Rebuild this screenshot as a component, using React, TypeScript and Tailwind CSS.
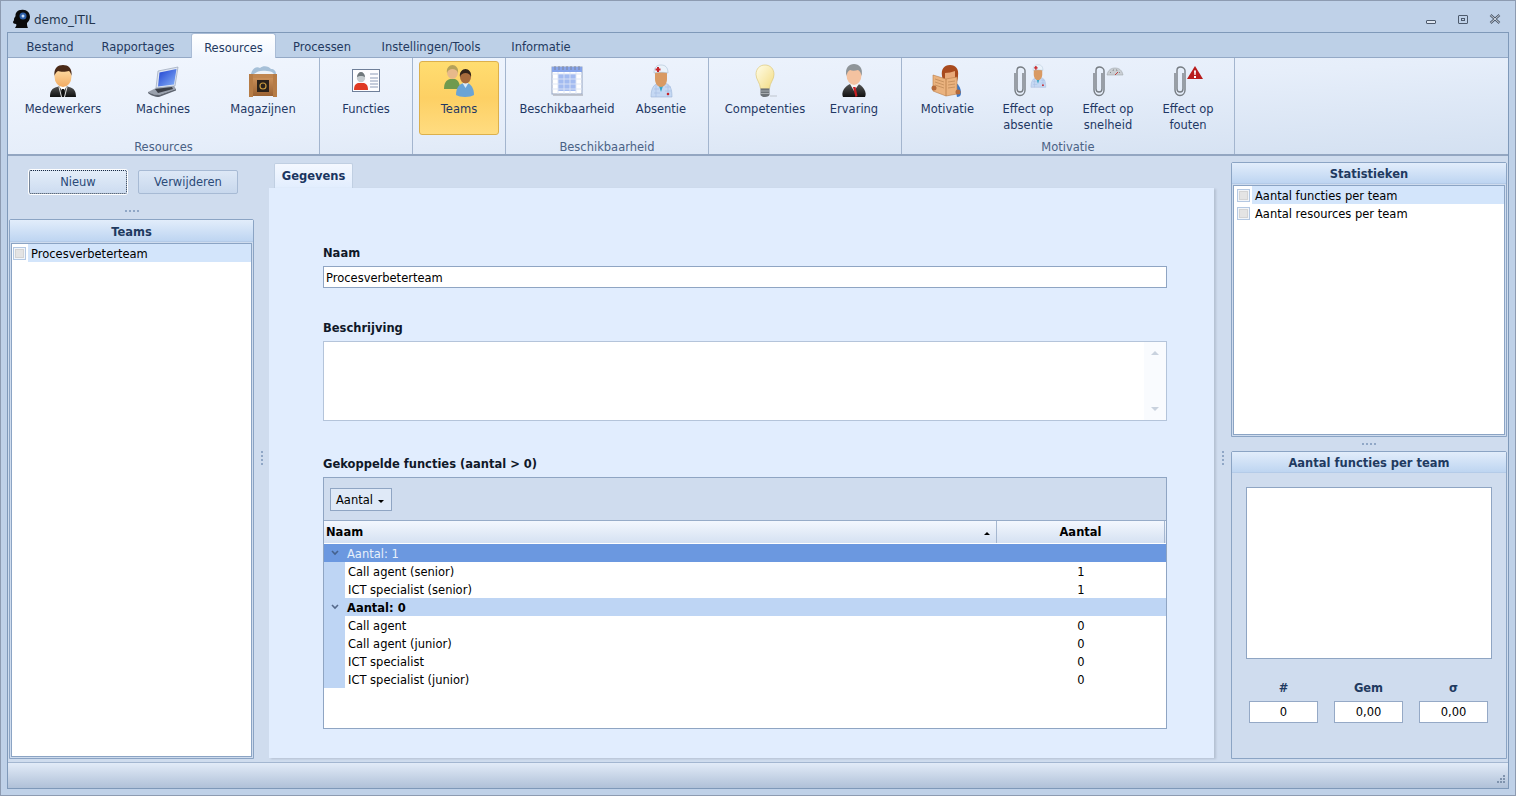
import React, { ReactNode } from "react";

const tabs = [
  { label: "Bestand", cls: "w-[84px]" },
  { label: "Rapportages", cls: "w-[92px] mr-[7px]" },
  { label: "Resources", cls: "w-[85px]", active: true },
  { label: "Processen", cls: "w-[92px]" },
  { label: "Instellingen/Tools", cls: "w-[126px]" },
  { label: "Informatie", cls: "w-[94px]" },
];

function Defs() {
  return (
    <svg width="0" height="0" className="block h-0 w-0">
      <defs>
        <linearGradient id="skin" x1="0" y1="0" x2="0" y2="1">
          <stop offset="0" stopColor="#ffe3ae" />
          <stop offset="1" stopColor="#f2ab62" />
        </linearGradient>
        <linearGradient id="suit" x1="0" y1="0" x2="0" y2="1">
          <stop offset="0" stopColor="#555" />
          <stop offset="1" stopColor="#111" />
        </linearGradient>
        <linearGradient id="bulb" x1="0" y1="0" x2="1" y2="1">
          <stop offset="0" stopColor="#fffde8" />
          <stop offset="1" stopColor="#f3dc83" />
        </linearGradient>
        <linearGradient id="screen" x1="0" y1="0" x2="1" y2="1">
          <stop offset="0" stopColor="#1c3fd0" />
          <stop offset="1" stopColor="#8ab4f8" />
        </linearGradient>
        <linearGradient id="wood" x1="0" y1="0" x2="0" y2="1">
          <stop offset="0" stopColor="#c98f58" />
          <stop offset="1" stopColor="#9a6233" />
        </linearGradient>
      </defs>
    </svg>
  );
}

function Medewerker() {
  return (
    <svg width="34" height="34" viewBox="0 0 34 34">
      <path d="M4 33c0-6 2-9 7-10l3-1h6l3 1c5 1 7 4 7 10z" fill="url(#suit)" />
      <path d="M13 22l4 6 4-6z" fill="#fff" />
      <path d="M16 25h2l1 8h-4z" fill="#111" />
      <path d="M13 23l2.500 10M21 23l-2.500 10" stroke="#e4e4e4" strokeWidth="1" />
      <ellipse cx="17" cy="12.500" rx="8.500" ry="10.500" fill="url(#skin)" />
      <path d="M8.500 12C7.500 4 12 1 17 1s9.500 3 8.500 11c-.5-2-1-4-2.500-5-3 1-9 1-11 0-2 1-3 3-3.500 5z" fill="#4a2a18" />
    </svg>
  );
}

function Laptop() {
  return (
    <svg width="34" height="34" viewBox="0 0 34 34">
      <path d="M12 7l20-4-3 19-19 2z" fill="#dfe6f2" stroke="#8d99ad" strokeWidth=".6" />
      <path d="M13.500 8.500L30.500 5l-2.500 15.500-16 2z" fill="url(#screen)" />
      <path d="M10 24l18-2 2 3-17 6c-4 0-10-2-11-3z" fill="#9aa1ad" />
      <path d="M9 25l17-2 1 2-15 4z" fill="#3b3f47" />
      <path d="M2 28c3 2 8 3 11 3l17-6v1.500L13 33C9 33 4 31 2 29z" fill="#5f6570" />
    </svg>
  );
}

function Crate() {
  return (
    <svg width="34" height="34" viewBox="0 0 34 34">
      <path d="M5 10c1-5 5-8 9-6 3-3 9-2 11 1 3 0 5 2 5 5z" fill="#a6c0d8" />
      <path d="M8 10c3-3 8-4 13-3 3 0 6 1 7 3z" fill="#eef3f8" />
      <path d="M3 10h28v4H3z" fill="#c08650" />
      <path d="M4 14h26v18H4z" fill="url(#wood)" />
      <path d="M3 10h4v23H3zM27 10h4v23h-4z" fill="#b67c46" />
      <path d="M11 16h12v12H11z" fill="#2a211a" />
      <circle cx="17" cy="22" r="3" fill="none" stroke="#c89a3e" strokeWidth="1.200" />
    </svg>
  );
}

function Card() {
  return (
    <svg width="30" height="30" viewBox="0 0 30 30">
      <rect x="1.500" y="3.500" width="27" height="22" fill="#fdfdff" stroke="#6f7f99" />
      <path d="M3 24c0-5 2-7 5-7h4c3 0 5 2 5 7z" fill="#e03a24" />
      <circle cx="10" cy="12" r="4.200" fill="#c5cbce" />
      <path d="M6 11c0-3 2-5 4-5s4 2 4 5c-2-1.500-6-1.500-8 0z" fill="#70787c" />
      <path d="M19 8h8M19 12h8M19 15h8M19 18h8M19 21h8" stroke="#8d9cb8" strokeWidth="1.200" />
    </svg>
  );
}

function Team() {
  return (
    <svg width="34" height="34" viewBox="0 0 34 34">
      <path d="M2 25c0-6 2-9 6-10h5c3 1 5 4 5 10z" fill="#6f9a4e" />
      <ellipse cx="10.500" cy="8.500" rx="5.500" ry="6.500" fill="#e7b98a" />
      <path d="M5 9c-1-5 2.500-8 5.500-8s6.500 3 5.500 8c-1-3-3-4-5.500-4S6 6 5 9z" fill="#b5a25a" />
      <path d="M14 31c0-7 3-11 8-12h3c4 1 7 5 7 12-2 1-5 2-9 2s-7-1-9-2z" fill="#6aa4d6" />
      <path d="M20.500 19l3 5 3-5z" fill="#dcebf8" />
      <ellipse cx="23.500" cy="13" rx="5.500" ry="6.500" fill="#a86b3d" />
      <path d="M18 13c-1-5 2.500-8 5.500-8s6.500 3 5.500 8c-1-3-3-4-5.500-4S19 10 18 13z" fill="#33231a" />
    </svg>
  );
}

function Calendar() {
  return (
    <svg width="34" height="34" viewBox="0 0 34 34">
      <rect x="2" y="3" width="30" height="27" fill="#fff" stroke="#93a3c2" />
      <rect x="2" y="3" width="30" height="5" fill="#86a4ea" />
      <path d="M8 10h18v17H8z" fill="#a3bbf0" />
      <path d="M2 10h30M2 15h30M2 20h30M2 25h30M8 8v22M14 8v22M20 8v22M26 8v22" stroke="#dbe4f5" strokeWidth=".9" />
      <path d="M5 2v4M9 2v4M13 2v4M17 2v4M21 2v4M25 2v4M29 2v4" stroke="#7a8296" strokeWidth=".9" />
      <path d="M3 31h30" stroke="#b5b9c2" strokeWidth="1.500" />
    </svg>
  );
}

function Nurse({ size = 34 }: { size?: number }) {
  return (
    <svg width={size} height={size} viewBox="0 0 34 34">
      <path d="M7 33c0-9 3-13 8-14h5c6 1 8 5 8 14z" fill="#c5d8f3" stroke="#9ab3d6" strokeWidth=".6" />
      <path d="M10 25h5M10 29h6M21 23h6M21 27h6M12 21v12M24 21v12" stroke="#a4bde2" strokeWidth=".6" />
      <path d="M14 19l3 9 3-9z" fill="#35a6c9" />
      <circle cx="24" cy="30" r="1.300" fill="#c8242a" />
      <path d="M11 8h12v7c0 5-3 8-6 8s-6-3-6-8z" fill="#d99a63" />
      <path d="M10 9c0-6 3-8 7-8s7 2 7 8c-4-1-10-1-14 0z" fill="#eaf2fa" stroke="#a9c0d4" strokeWidth=".6" />
      <path d="M13 3h2v1.500h1.500v2H15V8h-2V6.500h-1.500v-2H13z" fill="#c8242a" />
    </svg>
  );
}

function Bulb() {
  return (
    <svg width="34" height="34" viewBox="0 0 34 34">
      <path d="M17 1c5.500 0 9 4 9 9.500 0 5-4 8-4.500 14h-9C12 18.500 8 15.500 8 10.500 8 5 11.500 1 17 1z" fill="url(#bulb)" stroke="#d8c16a" strokeWidth=".6" />
      <path d="M12.500 24.500h9v6c0 1.500-2 2.500-4.500 2.500s-4.500-1-4.500-2.500z" fill="#6d7378" />
      <path d="M12.500 27h9M12.500 29.500h9" stroke="#b8bcc0" strokeWidth=".8" />
      <path d="M22 32h7" stroke="#ccd3dc" strokeWidth="1.500" />
    </svg>
  );
}

function Ervaring() {
  return (
    <svg width="34" height="34" viewBox="0 0 34 34">
      <path d="M6 33c-1-2-1-5 1-8 2-3 5-5 7-5h6c3 0 5 2 7 5 2 3 2 6 1 8z" fill="url(#suit)" />
      <path d="M13 20l4 7 5-7z" fill="#f4f4f4" />
      <path d="M16 23h2.500l2 9-2 1z" fill="#c81e22" />
      <ellipse cx="17" cy="11" rx="7.500" ry="10" fill="#f4c2a0" />
      <path d="M9.500 12C7.500 4 12 0 17 0s9.500 4 7.500 12c-.5-3-1.500-5-3.500-6-3 1-6 1-8 0-2 1-3 3-3.500 6z" fill="#8f9599" />
    </svg>
  );
}

function Motivatie() {
  return (
    <svg width="34" height="34" viewBox="0 0 34 34">
      <path d="M23 18c4 1 7 6 7 11 0 3-2 4-4 4z" fill="#3a78c8" />
      <path d="M11 12C10 5 13 1 19 1s9 4 8 11c0 3-1 5-1 6H12z" fill="#a84a1e" />
      <path d="M14 9c3 0 7-1 10-2v9H14z" fill="#e8a878" />
      <path d="M2 11l13 4 11-2v17l-11 2-13-5z" fill="#eab27e" stroke="#b87c48" strokeWidth=".6" />
      <path d="M15 15v17" stroke="#b87c48" strokeWidth=".8" />
      <path d="M4 15l9 3M4 18l9 3M4 21l9 3M17 18l7-1M17 21l7-1M17 24l7-1" stroke="#c48e5c" strokeWidth=".9" />
      <circle cx="3" cy="24" r="2.500" fill="#b4693a" />
      <circle cx="27" cy="28" r="2.500" fill="#b4693a" />
    </svg>
  );
}

function Clip() {
  return (
    <svg width="14" height="32" viewBox="0 0 14 32" className="shrink-0">
      <path
        d="M10 8v16c0 2-1 3-3 3s-3-1-3-3V5.500C4 3.500 5.500 2 7.500 2S12 3.500 12 5.500V25c0 3-2 5.500-5 5.500S2 28 2 25V8"
        fill="none"
        stroke="#777d83"
        strokeWidth="1.400"
      />
    </svg>
  );
}

function ClipNurse() {
  return (
    <div className="flex w-[30px] items-start">
      <Clip />
      <div className="-ml-[1px] -mt-[1px]">
        <Nurse size={24} />
      </div>
    </div>
  );
}

function ClipGauge() {
  return (
    <div className="flex w-[32px] items-start">
      <Clip />
      <svg width="18" height="12" viewBox="0 0 18 12" className="mt-[1px]">
        <path d="M1 9C2 4 5 2 9 2s7 2 8 7z" fill="#c9ced3" stroke="#a1a7ad" strokeWidth=".6" />
        <path d="M4 7l1-1M7 5l.5-1.500M11 5l-.5-1.500M14 7l-1-1" stroke="#777" strokeWidth=".8" />
        <path d="M9 9l3-3" stroke="#c03030" strokeWidth=".9" />
      </svg>
    </div>
  );
}

function ClipWarning() {
  return (
    <div className="flex w-[30px] items-start">
      <Clip />
      <svg width="16" height="14" viewBox="0 0 16 14" className="mt-[1px]">
        <path d="M8 0l8 13H0z" fill="#b81c1c" />
        <path d="M7 4.500h2l-.4 4.500H7.400zM7 10h2v2H7z" fill="#fff" />
      </svg>
    </div>
  );
}

function RibbonButton({ icon, label, w, active }: { icon: ReactNode; label: ReactNode; w: string; active?: boolean }) {
  return (
    <div
      className={
        "flex flex-col items-center rounded-[3px] text-center leading-[16px] text-[#1f3864] " +
        w +
        (active
          ? " h-[74px] border border-[#dcb04c] bg-gradient-to-b from-[#ffdd70] via-[#fdd064] to-[#ffdc80] pt-[2px]"
          : " h-[74px] pt-[3px]")
      }
    >
      <div className="flex h-[34px] shrink-0 items-center justify-center">{icon}</div>
      <div className="mt-[3px]">{label}</div>
    </div>
  );
}

function RibbonGroup({ w, pad, label, children }: { w: string; pad: string; label?: string; children: ReactNode }) {
  return (
    <div className={"flex h-full flex-col border-r border-r-[#a3b5ce] " + w}>
      <div className={"flex h-[79px] pt-[3px] " + pad}>{children}</div>
      <div className="flex flex-1 items-center justify-center pt-[4px] text-[#4a6285]">{label}</div>
    </div>
  );
}

function Dots({ vertical }: { vertical?: boolean }) {
  const items = [0, 1, 2, 3];
  return (
    <div className={"flex gap-[2px] " + (vertical ? "flex-col" : "flex-row")}>
      {items.map((i) => (
        <div key={i} className="h-[2px] w-[2px] bg-[#90a7c6]" />
      ))}
    </div>
  );
}

function Check({ offset }: { offset: string }) {
  return (
    <div className={"flex h-[13px] w-[13px] shrink-0 items-center justify-center border border-[#b4c8e2] bg-[#f2f5f9] " + offset}>
      <div className="h-[9px] w-[9px] bg-[#e4e4e4] shadow-[inset_0_0_0_1px_#d4d4d4]" />
    </div>
  );
}

function ListRow({ label, selected, offset }: { label: string; selected?: boolean; offset: string }) {
  return (
    <div className="flex h-[18px] items-center text-black">
      <Check offset={offset} />
      <div className={"ml-[2px] flex h-full flex-1 items-center pl-[3px] pt-[3px] " + (selected ? "bg-[#d3e5fb]" : "")}>{label}</div>
    </div>
  );
}

function PanelHeader({ title, h }: { title: string; h: string }) {
  return (
    <div className={"flex shrink-0 items-center justify-center border-b border-b-[#b4cbe8] bg-gradient-to-b from-[#e2edfb] to-[#bed5f1] pt-[4px] font-bold text-[#1f3a60] " + h}>
      {title}
    </div>
  );
}

function GridRow({ name, value }: { name: string; value: string }) {
  return (
    <div className="flex h-[18px] items-center text-black">
      <div className="h-full w-[21px] bg-[#bed5f4]" />
      <div className="w-[652px] pl-[3px] pt-[3px]">{name}</div>
      <div className="w-[168px] pt-[3px] text-center">{value}</div>
    </div>
  );
}

function Stat({ label, value }: { label: string; value: string }) {
  return (
    <div className="flex w-[69px] flex-col items-center">
      <div className="mb-[4px] font-bold text-[#1f3a60]">{label}</div>
      <div className="flex h-[22px] w-full items-center justify-center border border-[#95a9c6] bg-white text-black">{value}</div>
    </div>
  );
}

function Chevron({ color }: { color: string }) {
  return (
    <svg width="23" height="10" viewBox="0 0 23 10" className="shrink-0">
      <path d="M8 3l3 3 3-3" fill="none" stroke={color} strokeWidth="1.600" />
    </svg>
  );
}

export default function App() {
  return (
    <div className="flex h-[796px] w-[1516px] flex-col overflow-hidden border border-[#8d9bb1] bg-[#bfd1e8] font-['DejaVu_Sans',sans-serif] text-[11.5px]">
      <Defs />
      {/* title bar */}
      <div className="flex h-[31px] shrink-0 items-center pl-[11px] pt-[5px]">
        <svg width="20" height="20" viewBox="0 0 20 20">
          <path d="M9 1c5-1 9 2 9 7 0 3-2 5-3 6 0 2 0 3 1 5H3c1-2 2-3 1-4-2 0-3-1-3-2s1-1 1-2 0-2 1-3 0-2 1-4c1-2 3-3 4-3z" fill="#0a0a0a" />
          <circle cx="11" cy="7" r="3.500" fill="#2d5fa8" />
          <circle cx="11" cy="7" r="1.500" fill="#cfe0f5" />
        </svg>
        <div className="ml-[2px] pt-[1px] text-[12px] text-[#24364f]">demo_ITIL</div>
        <div className="ml-auto mr-[14px] flex items-center">
          <div className="mr-[22px] mt-[5px] h-[4px] w-[10px] rounded-[1px] border border-[#4d5a6c] bg-[#dfe7f2]" />
          <div className="mr-[21px] flex h-[9px] w-[10px] items-center justify-center rounded-[1px] border border-[#4d5a6c]">
            <div className="h-[3px] w-[4px] border border-[#4d5a6c]" />
          </div>
          <svg width="12" height="10" viewBox="0 0 12 10">
            <path d="M1.500 1l9 8M10.500 1l-9 8" stroke="#4d5a6c" strokeWidth="2.400" />
            <path d="M1.500 1l9 8M10.500 1l-9 8" stroke="#eef3f9" strokeWidth=".8" />
          </svg>
        </div>
      </div>

      {/* frame */}
      <div className="mx-[6px] flex h-[757px] w-[1502px] flex-col border border-[#7f99b9]">
        <div className="flex h-[25px] shrink-0 border-b border-b-[#94a9c6] bg-[#bdd0e7]">
          {tabs.map((t) => (
            <div
              key={t.label}
              className={
                "flex items-center justify-center pt-[5px] text-[#23395f] " +
                t.cls +
                (t.active ? " -mb-[1px] rounded-t-[3px] border-x border-t border-[#a9bcd6] bg-gradient-to-b from-white to-[#eff5fe]" : "")
              }
            >
              {t.label}
            </div>
          ))}
        </div>

        {/* ribbon */}
        <div className="flex h-[98px] shrink-0 border-b-2 border-b-[#93a6c1] bg-gradient-to-br from-[#f1f6fe] via-[#e6eefa] to-[#d3e0f1]">
          <RibbonGroup w="w-[312px]" pad="pl-[5px]" label="Resources">
            <RibbonButton w="w-[100px]" icon={<Medewerker />} label="Medewerkers" />
            <RibbonButton w="w-[100px]" icon={<Laptop />} label="Machines" />
            <RibbonButton w="w-[100px]" icon={<Crate />} label="Magazijnen" />
          </RibbonGroup>
          <RibbonGroup w="w-[93px]" pad="">
            <RibbonButton w="w-[92px]" icon={<Card />} label="Functies" />
          </RibbonGroup>
          <RibbonGroup w="w-[93px]" pad="pl-[6px]">
            <RibbonButton w="w-[80px]" active icon={<Team />} label="Teams" />
          </RibbonGroup>
          <RibbonGroup w="w-[203px]" pad="pl-[6px]" label="Beschikbaarheid">
            <RibbonButton w="w-[110px]" icon={<Calendar />} label="Beschikbaarheid" />
            <RibbonButton w="w-[78px]" icon={<Nurse />} label="Absentie" />
          </RibbonGroup>
          <RibbonGroup w="w-[193px]" pad="pl-[6px]">
            <RibbonButton w="w-[100px]" icon={<Bulb />} label="Competenties" />
            <RibbonButton w="w-[78px]" icon={<Ervaring />} label="Ervaring" />
          </RibbonGroup>
          <RibbonGroup w="w-[333px]" pad="pl-[5px]" label="Motivatie">
            <RibbonButton w="w-[81px]" icon={<Motivatie />} label="Motivatie" />
            <RibbonButton w="w-[80px]" icon={<ClipNurse />} label={<>Effect op<br />absentie</>} />
            <RibbonButton w="w-[80px]" icon={<ClipGauge />} label={<>Effect op<br />snelheid</>} />
            <RibbonButton w="w-[80px]" icon={<ClipWarning />} label={<>Effect op<br />fouten</>} />
          </RibbonGroup>
        </div>

        {/* main */}
        <div className="flex flex-1 bg-[#cfdcee]">
          {/* left column */}
          <div className="flex w-[246px] shrink-0 flex-col pb-[3px] pl-[1px]">
            <div className="flex h-[63px] flex-col">
              <div className="mt-[14px] flex gap-[11px] pl-[20px]">
                <div className="flex h-[24px] w-[98px] items-center justify-center rounded-[2px] border border-dotted border-[#18283f] bg-gradient-to-b from-[#e3edf9] to-[#cddcf0] pt-[2px] text-[#2b4a78] shadow-[0_0_0_1px_#fff]">
                  Nieuw
                </div>
                <div className="flex h-[24px] w-[100px] items-center justify-center rounded-[2px] border border-[#a7bad4] bg-gradient-to-b from-[#dde8f6] to-[#c8d8ed] pt-[2px] text-[#2b4a78]">
                  Verwijderen
                </div>
              </div>
              <div className="mt-[16px] flex justify-center">
                <Dots />
              </div>
            </div>
            <div className="flex flex-1 flex-col rounded-t-[2px] border border-[#8ba4c4]">
              <PanelHeader title="Teams" h="h-[22px]" />
              <div className="mx-[1px] mb-[1px] mt-[1px] flex-1 border border-[#8ba4c4] bg-white">
                <ListRow label="Procesverbeterteam" selected offset="ml-[1px]" />
              </div>
            </div>
          </div>

          {/* left splitter */}
          <div className="flex w-[15px] shrink-0 items-center justify-center pb-[2px]">
            <Dots vertical />
          </div>

          {/* centre */}
          <div className="flex w-[945px] shrink-0 flex-col pt-[7px]">
            <div className="flex h-[25px] shrink-0 pl-[5px]">
              <div className="flex h-[26px] w-[79px] items-center justify-center rounded-t-[2px] border-x border-t border-[#c0cfe2] bg-gradient-to-b from-[#f4f8ff] to-[#e1edfe] font-bold text-[#1a3661]">
                Gegevens
              </div>
            </div>
            <div className="mb-[4px] flex-1 bg-[#e1edfe] pl-[54px] shadow-[2px_1px_2px_#b4c1d2]">
              <div className="mt-[57px] h-[16px] font-bold leading-[16px] text-[#101828]">Naam</div>
              <div className="mt-[5px] flex h-[22px] w-[844px] items-center border border-[#8fa5c3] bg-white pl-[2px] pt-[3px] text-black">Procesverbeterteam</div>
              <div className="mt-[32px] h-[16px] font-bold leading-[16px] text-[#101828]">Beschrijving</div>
              <div className="mt-[5px] flex h-[80px] w-[844px] justify-end border border-[#b4c4da] bg-white">
                <div className="flex h-full w-[22px] flex-col items-center justify-between bg-[#f9fbfe] py-[9px]">
                  <div className="h-0 w-0 border-x-[4px] border-b-[4px] border-x-transparent border-b-[#c9d2de]" />
                  <div className="h-0 w-0 border-x-[4px] border-t-[4px] border-x-transparent border-t-[#c9d2de]" />
                </div>
              </div>
              <div className="mt-[35px] h-[16px] font-bold leading-[16px] text-[#101828]">Gekoppelde functies (aantal &gt; 0)</div>
              <div className="mt-[5px] h-[252px] w-[844px] border border-[#8fa5c3] bg-white">
                <div className="flex h-[43px] items-start border-b border-b-[#96abc8] bg-[#cfdcee] pl-[6px] pt-[10px]">
                  <div className="flex h-[23px] w-[62px] items-center gap-[5px] border border-[#8fa5c3] bg-[#dfe9f7] pl-[5px] pt-[3px] text-black">
                    Aantal
                    <div className="h-0 w-0 border-x-[3.5px] border-t-[3.5px] border-x-transparent border-t-black" />
                  </div>
                </div>
                <div className="flex h-[23px] border-b border-b-white bg-gradient-to-b from-[#f3f7fe] to-[#d5e1f2] font-bold text-black">
                  <div className="flex w-[673px] items-center justify-between border-r border-r-[#a5b7d0] pl-[2px] pr-[6px] pt-[2px]">
                    Naam
                    <div className="h-0 w-0 border-x-[3.5px] border-b-[3.5px] border-x-transparent border-b-black" />
                  </div>
                  <div className="flex w-[168px] items-center justify-center border-r border-r-[#a5b7d0] pt-[2px]">Aantal</div>
                </div>
                <div className="flex h-[18px] items-center bg-[#6b98e0] text-[#e8f0fb]">
                  <Chevron color="#45628e" />
                  <span className="pt-[3px]">Aantal: 1</span>
                </div>
                <GridRow name="Call agent (senior)" value="1" />
                <GridRow name="ICT specialist (senior)" value="1" />
                <div className="flex h-[18px] items-center bg-[#bed5f4] font-bold text-black">
                  <Chevron color="#55698a" />
                  <span className="pt-[3px]">Aantal: 0</span>
                </div>
                <GridRow name="Call agent" value="0" />
                <GridRow name="Call agent (junior)" value="0" />
                <GridRow name="ICT specialist" value="0" />
                <GridRow name="ICT specialist (junior)" value="0" />
              </div>
            </div>
          </div>

          {/* right splitter */}
          <div className="flex w-[17px] shrink-0 items-center justify-center pb-[2px] pl-[1px]">
            <Dots vertical />
          </div>

          {/* right column */}
          <div className="flex w-[276px] shrink-0 flex-col pb-[3px] pt-[6px]">
            <div className="flex h-[275px] shrink-0 flex-col rounded-t-[2px] border border-[#8ba4c4]">
              <PanelHeader title="Statistieken" h="h-[21px]" />
              <div className="mx-[1px] mb-[1px] mt-[1px] flex-1 border border-[#8ba4c4] bg-white">
                <ListRow label="Aantal functies per team" selected offset="ml-[3px]" />
                <ListRow label="Aantal resources per team" offset="ml-[3px]" />
              </div>
            </div>
            <div className="flex h-[14px] shrink-0 items-center justify-center">
              <Dots />
            </div>
            <div className="flex flex-1 flex-col rounded-t-[2px] border border-[#8ba4c4]">
              <PanelHeader title="Aantal functies per team" h="h-[21px]" />
              <div className="mx-[14px] mt-[14px] h-[172px] w-[246px] border border-[#8fa5c3] bg-white" />
              <div className="mt-[21px] flex justify-between pl-[17px] pr-[18px]">
                <Stat label="#" value="0" />
                <Stat label="Gem" value="0,00" />
                <Stat label="σ" value="0,00" />
              </div>
            </div>
          </div>
        </div>

        {/* status bar */}
        <div className="flex h-[26px] shrink-0 items-end justify-end border-t border-t-[#a3b6d0] bg-gradient-to-b from-[#e2ebf8] to-[#b0c1d8] pb-[3px] pr-[3px]">
          <svg width="10" height="10" viewBox="0 0 10 10">
            <path d="M8 0h2v2H8zM5 3h2v2H5zM8 3h2v2H8zM2 6h2v2H2zM5 6h2v2H5zM8 6h2v2H8z" fill="#7f93ad" />
          </svg>
        </div>
      </div>
    </div>
  );
}
